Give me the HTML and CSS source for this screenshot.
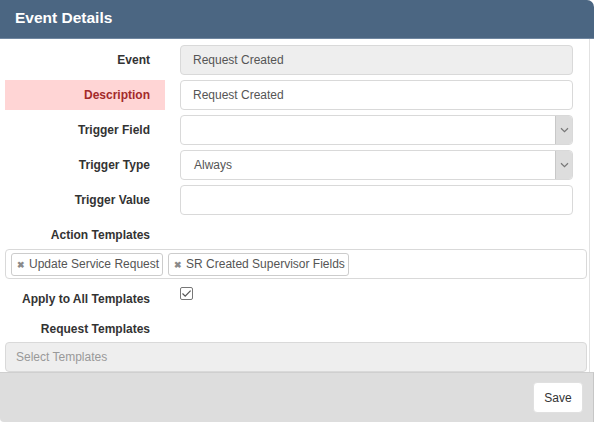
FILE: index.html
```html
<!DOCTYPE html>
<html>
<head>
<meta charset="utf-8">
<link rel="stylesheet" href="styles.css">
</head>
<body>
<div class="modal">
  <div class="header"><h1 class="title">Event Details</h1></div>
  <div class="body">
    <div class="row">
      <label class="lbl">Event</label>
      <div class="ctl input disabled">Request Created</div>
    </div>
    <div class="row">
      <label class="lbl error">Description</label>
      <div class="ctl input">Request Created</div>
    </div>
    <div class="row">
      <label class="lbl">Trigger Field</label>
      <div class="ctl input select"><span class="val"></span><span class="arrow"><svg width="9" height="6" viewBox="0 0 9 6"><path d="M1 1.2 L4.5 4.6 L8 1.2" fill="none" stroke="#777" stroke-width="1.2"/></svg></span></div>
    </div>
    <div class="row">
      <label class="lbl">Trigger Type</label>
      <div class="ctl input select"><span class="val">Always</span><span class="arrow"><svg width="9" height="6" viewBox="0 0 9 6"><path d="M1 1.2 L4.5 4.6 L8 1.2" fill="none" stroke="#777" stroke-width="1.2"/></svg></span></div>
    </div>
    <div class="row">
      <label class="lbl">Trigger Value</label>
      <div class="ctl input"></div>
    </div>
    <div class="row lblrow">
      <label class="lbl">Action Templates</label>
    </div>
    <div class="tagbox">
      <span class="tag"><span class="x">✖</span>Update Service Request</span>
      <span class="tag"><span class="x">✖</span>SR Created Supervisor Fields</span>
    </div>
    <div class="row applyrow">
      <label class="lbl">Apply to All Templates</label>
      <div class="chkwrap"><span class="chk"><svg width="11" height="9" viewBox="0 0 11 9"><path d="M1.5 4.5 L4.2 7.2 L9.6 1.6" fill="none" stroke="#555" stroke-width="1.2"/></svg></span></div>
    </div>
    <div class="row lblrow2">
      <label class="lbl">Request Templates</label>
    </div>
    <div class="wide input disabled placeholder">Select Templates</div>
  </div>
  <div class="footer">
    <button class="save">Save</button>
  </div>
</div>
</body>
</html>
```
FILE: styles.css
```css
* { box-sizing: border-box; }
html, body { margin: 0; padding: 0; background: #fff; }
body {
  font-family: "Liberation Sans", Arial, sans-serif;
  font-size: 12px;
  color: #333;
  width: 594px;
  height: 422px;
  overflow: hidden;
}
.modal {
  width: 594px;
  height: 422px;
  display: flex;
  flex-direction: column;
}
.header {
  height: 39px;
  background: #4b6682;
  border-top-right-radius: 7px;
  border-bottom: 1px solid #6f86a0;
  display: flex;
  align-items: center;
  padding-left: 15px;
}
.title {
  margin: 0;
  font-size: 15.5px;
  font-weight: bold;
  color: #fff;
  padding-bottom: 3px;
}
.body {
  width: 590px;
  border-right: 1px solid #e2e2e2;
  padding: 6px 3px 0 5px;
  height: 333px;
}
.row {
  display: grid;
  grid-template-columns: 160px 393px;
  column-gap: 15px;
  align-items: center;
  margin-bottom: 5px;
}
.lbl {
  display: flex;
  align-items: center;
  justify-content: flex-end;
  height: 30px;
  padding-right: 15px;
  font-weight: bold;
  color: #333;
}
.lbl.error {
  background: #ffd5d5;
  color: #a32a2a;
}
.input {
  height: 30px;
  border: 1px solid #d9d9d9;
  border-radius: 4px;
  background: #fff;
  color: #555;
  display: flex;
  align-items: center;
  padding-left: 12px;
}
.input.disabled { background: #eee; }
.select { padding-right: 0; justify-content: space-between; overflow: hidden; }
.select .val { padding-left: 1px; }
.arrow {
  width: 17px;
  height: 100%;
  background: #ddd;
  border-left: 1px solid #c8c8c8;
  display: flex;
  align-items: center;
  justify-content: center;
}
.lblrow { margin-bottom: -1px; }
.tagbox {
  width: 582px;
  height: 30px;
  border: 1px solid #d9d9d9;
  border-radius: 4px;
  display: flex;
  align-items: center;
  gap: 5px;
  padding-left: 5px;
}
.tag {
  height: 23px;
  border: 1px solid #ccc;
  border-radius: 3px;
  background: #fff;
  color: #555;
  display: flex;
  align-items: center;
  padding: 0 3px 0 5px;
  font-size: 12px;
}
.x {
  font-size: 8.5px;
  font-weight: bold;
  color: #8a8a8a;
  margin-right: 4px;
  margin-top: 1px;
}
.applyrow { margin-top: 5px; margin-bottom: 0; }
.chkwrap { height: 30px; display: flex; align-items: flex-start; padding-top: 3px; }
.chk {
  width: 13px;
  height: 13px;
  border: 1px solid #777;
  border-radius: 2px;
  display: flex;
  align-items: center;
  justify-content: center;
  background: #fff;
}
.lblrow2 { margin-bottom: -2px; }
.wide { width: 582px; }
.placeholder { color: #999; padding-left: 10px; }
.footer {
  flex: 1;
  background: #dddddd;
  border-top: 1px solid #cfcfcf;
  border-right: 1px solid #c6c6c6;
  border-bottom-left-radius: 4px;
  display: flex;
  align-items: center;
  justify-content: flex-end;
  padding-right: 10px;
}
.save {
  width: 50px;
  height: 31px;
  background: #fff;
  border: 1px solid #e0e0e0;
  border-radius: 4px;
  font-family: "Liberation Sans", Arial, sans-serif;
  font-size: 12px;
  color: #333;
  margin-top: 0;
}
```
